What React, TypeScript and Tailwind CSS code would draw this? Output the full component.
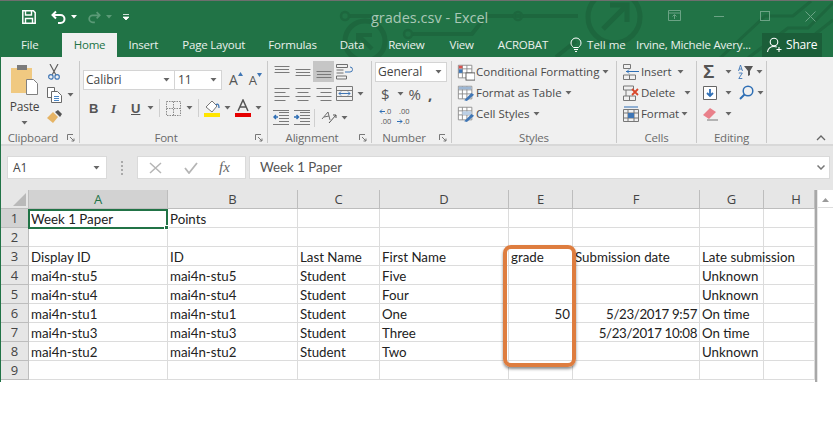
import type { ReactNode } from "react";

const ui = "font-['Open_Sans',sans-serif]";

function Caret({ className = "" }: { className?: string }) {
  return (
    <svg width="7" height="4" viewBox="0 0 7 4" className={`shrink-0 ${className}`}>
      <path d="M0.5 0h6L3.5 3.5z" fill="#666" />
    </svg>
  );
}

function Launcher() {
  return (
    <svg width="8" height="8" viewBox="0 0 8 8" className="shrink-0">
      <path d="M.5 6V.5H6M3 3l4 4M7 4.5V7H4.5" stroke="#777" fill="none" />
    </svg>
  );
}

function Lines({ kind, active = false }: { kind: "l" | "c" | "r"; active?: boolean }) {
  const rows = [2, 6, 10, 14];
  const w = [15, 11, 15, 11];
  return (
    <span className={`w-[21px] h-[21px] flex items-center justify-center ${active ? "bg-[#c6c6c6]" : ""}`}>
      <svg width="16" height="16" viewBox="0 0 16 16">
        {rows.map((y, i) => (
          <rect
            key={y}
            x={kind === "l" ? 0.5 : kind === "c" ? (16 - w[i]) / 2 : 15.5 - w[i]}
            y={y}
            width={w[i]}
            height="1"
            fill="#7a7a7a"
          />
        ))}
      </svg>
    </span>
  );
}

function VAlign({ pos, active = false }: { pos: number; active?: boolean }) {
  return (
    <span className={`w-[21px] h-[21px] flex items-center justify-center ${active ? "bg-[#c6c6c6]" : ""}`}>
      <svg width="16" height="16" viewBox="0 0 16 16">
        {[0, 3, 6].map((d, i) => (
          <rect key={d} x={i === 1 ? 1 : 0.5} y={pos + d} width={i === 1 ? 14 : 15} height="1" fill="#7a7a7a" />
        ))}
      </svg>
    </span>
  );
}

// the grow / shrink font buttons: a letter with a small blue triangle
function SizeButton({ size, up, className }: { size: string; up: boolean; className: string }) {
  return (
    <span className={`flex items-start text-[#555] leading-none ${size} ${className}`}>
      A
      <svg width="5" height="4" viewBox="0 0 5 4" className="shrink-0 -mt-[1px]">
        <path d={up ? "M0 4h5L2.500 0z" : "M0 0h5L2.500 4z"} fill="#3f76b5" />
      </svg>
    </span>
  );
}

function Group({ width, label, launcher, children }: { width: string; label: string; launcher?: boolean; children: ReactNode }) {
  return (
    <div className={`${width} shrink-0 h-[82px] flex flex-col border-r border-[#c9c9c9]`}>
      <div className="h-[72px] relative flex">{children}</div>
      <div className="flex-1 flex items-center relative">
        <span className={`flex-1 text-center text-[11.5px] tracking-[-0.2px] leading-none text-[#6b6b6b] ${launcher ? "pr-[15px]" : ""}`}>
          {label}
        </span>
        {launcher && (
          <span className="absolute right-[4px] top-[2px]">
            <Launcher />
          </span>
        )}
      </div>
    </div>
  );
}

function GridIcon({ children }: { children?: ReactNode }) {
  return (
    <svg width="18" height="18" viewBox="0 0 20 18" className="shrink-0">
      <path d="M1.5 1.5h15v14h-15zM1.5 5.5h15M1.5 10h15M6 1.5v14M11 1.5v14" stroke="#8a8a8a" fill="#fff" />
      {children}
    </svg>
  );
}

function StyleRow({ icon, label }: { icon: ReactNode; label: string }) {
  return (
    <div className="h-[21px] flex items-center text-[11.5px] text-[#4a4a4a] whitespace-nowrap">
      {icon}
      <span className="ml-[1px]">{label}</span>
      <Caret className="ml-[3px]" />
    </div>
  );
}

function CellRow({ icon, label, width }: { icon: ReactNode; label: string; width: string }) {
  return (
    <div className="h-[21px] flex items-center text-[11.5px] tracking-[-0.1px] text-[#4a4a4a] whitespace-nowrap">
      <span className="w-[18px] shrink-0">{icon}</span>
      <span className={width}>{label}</span>
      <Caret />
    </div>
  );
}

const rows: string[][] = [
  ["Week 1 Paper", "Points", "", "", "", "", "", ""],
  ["", "", "", "", "", "", "", ""],
  ["Display ID", "ID", "Last Name", "First Name", "grade", "Submission date", "Late submission", ""],
  ["mai4n-stu5", "mai4n-stu5", "Student", "Five", "", "", "Unknown", ""],
  ["mai4n-stu4", "mai4n-stu4", "Student", "Four", "", "", "Unknown", ""],
  ["mai4n-stu1", "mai4n-stu1", "Student", "One", "50", "5/23/2017 9:57", "On time", ""],
  ["mai4n-stu3", "mai4n-stu3", "Student", "Three", "", "5/23/2017 10:08", "On time", ""],
  ["mai4n-stu2", "mai4n-stu2", "Student", "Two", "", "", "Unknown", ""],
  ["", "", "", "", "", "", "", ""],
];

const columns = ["A", "B", "C", "D", "E", "F", "G", "H"];

function Sheet() {
  return (
    <div className="relative flex bg-white h-[192px] overflow-hidden">
      <div className="w-[816px] shrink-0 border-r-2 border-[#a8a8a8] font-['Lato',sans-serif] text-[13.3px] text-[#222]">
        <div className="grid grid-cols-[28px_139px_130px_82px_129px_64px_127px_64px_51px]">
          <div className="h-[19px] bg-[#e6e6e6] border-r border-b border-[#bdbdbd] flex items-end justify-end p-[2px]">
            <svg width="13" height="13" viewBox="0 0 13 13">
              <path d="M13 0v13H0z" fill="#b9b9b9" />
            </svg>
          </div>
          {columns.map((c, i) => (
            <div
              key={c}
              className={`h-[19px] border-r border-b border-[#bdbdbd] flex items-center justify-center pt-[2px] ${ui} text-[13px] ${
                i === 0 ? "bg-[#d2d2d2] text-[#217346]" : "bg-[#e6e6e6] text-[#444]"
              } ${c === "H" ? "pl-[14px]" : ""}`}
            >
              {c}
            </div>
          ))}
          {rows.map((row, r) => (
            <Row key={r} n={r + 1} row={row} />
          ))}
        </div>
      </div>
      <div className="flex-1 bg-[#e6e6e6] pl-[1px]">
        <div className="h-full bg-white flex flex-col">
          <div className="h-[15px] mt-[3px] border-b border-[#ddd] flex items-center justify-center">
            <svg width="7" height="4" viewBox="0 0 7 4">
              <path d="M0 4h7L3.5 0z" fill="#9a9a9a" />
            </svg>
          </div>
        </div>
      </div>
      {/* orange highlight round the grade column */}
      <div className="absolute left-[502px] top-[55px] w-[73px] h-[122px] border-[4px] border-[#de7d3f] rounded-[8px] shadow-[0_2px_3px_rgba(0,0,0,0.45)]" />
      <div className="absolute left-[27px] top-[19px] w-[140px] h-[20px] border-2 border-[#217346]">
        <span className="absolute -right-[3px] -bottom-[3px] w-[5px] h-[5px] bg-[#217346] border border-white" />
      </div>
    </div>
  );
}

function Row({ n, row }: { n: number; row: string[] }) {
  return (
    <>
      <div
        className={`h-[19px] border-r border-b border-[#bdbdbd] flex items-center justify-center pt-[2px] ${ui} text-[13px] text-[#444] ${
          n === 1 ? "bg-[#d2d2d2]" : "bg-[#e6e6e6]"
        }`}
      >
        {n}
      </div>
      {row.map((v, i) => (
        <div
          key={i}
          className={`h-[19px] border-r border-b border-[#dcdcdc] flex items-center pt-[3px] pl-[2px] pr-[2px] whitespace-nowrap ${
            v === "50" ? "justify-end" : ""
          } ${v.startsWith("5/") ? "justify-end tracking-[-0.35px]" : ""}`}
        >
          {v}
        </div>
      ))}
    </>
  );
}

function TitleArt() {
  return (
    <svg className="absolute inset-0" width="833" height="57" viewBox="0 0 833 57" fill="none" stroke="#1d673e" strokeWidth="4">
      <path d="M349 15h22l8 8M518 15h60M412 33h60l14-18h32M576 40l-20 16" />
      <circle cx="345" cy="15" r="4" strokeWidth="2.5" />
      <circle cx="518" cy="15" r="4" strokeWidth="2.5" />
      <circle cx="408" cy="33" r="4" strokeWidth="2.5" />
      <circle cx="365" cy="40" r="20" strokeWidth="5" />
      <path d="M358 48V34h14M358 34l14 14" />
      <circle cx="614" cy="16" r="26" strokeWidth="5" />
      <path d="M603 28l23-23M610 4h17v17" strokeWidth="5" />
      <path d="M720 57l45-42h28l18-15M748 57l40-30h20l25-25M785 57l48-38" strokeWidth="3" />
    </svg>
  );
}

function TitleBar() {
  return (
    <div className={`relative bg-[#217346] h-[57px] border-t border-[#6e6e6e] text-white ${ui}`}>
      <TitleArt />
      <div className="relative h-[32px] flex items-center">
        <svg width="14" height="14" viewBox="0 0 14 14" className="ml-[22px]">
          <path d="M.8.8h10.6l1.8 1.8v10.6H.8z" stroke="#fff" strokeWidth="1.5" fill="none" />
          <path d="M3.5 1v4h6V1M3.5 13V8.5h7V13" stroke="#fff" strokeWidth="1.4" fill="none" />
        </svg>
        <svg width="16" height="14" viewBox="0 0 16 14" className="ml-[15px]">
          <path d="M5 1.5 1.5 5 5 8.5M2 5h7.5a4 4 0 0 1 0 8H7" stroke="#fff" strokeWidth="2" fill="none" />
        </svg>
        <svg width="6" height="4" viewBox="0 0 6 4" className="ml-[4px]">
          <path d="M0 0h6L3 3.5z" fill="#fff" />
        </svg>
        <svg width="14" height="14" viewBox="0 0 16 14" className="ml-[10px]">
          <path d="M11 1.5 14.500 5 11 8.500M14 5H6.500a4 4 0 0 0 0 8H9" stroke="#5b9a77" strokeWidth="2" fill="none" />
        </svg>
        <svg width="6" height="4" viewBox="0 0 6 4" className="ml-[5px]">
          <path d="M0 0h6L3 3.500z" fill="#5b9a77" />
        </svg>
        <svg width="6" height="6" viewBox="0 0 6 6" className="ml-[11px]">
          <path d="M0 .5h6M0 3h6L3 6z" stroke="#fff" strokeWidth=".8" fill="#fff" />
        </svg>
        <span className="absolute left-[371px] top-[8px] text-[14.5px] leading-[18px] text-[#a9c8b6]">grades.csv - Excel</span>
        <div className="absolute left-[668px] top-[9px] flex items-center">
          <svg width="13" height="12" viewBox="0 0 13 12" fill="none" stroke="#6ba385">
            <path d="M.5 .5h12v10H.5zM.5 3h12M6.500 9V5M4.500 6.500l2-2 2 2" />
          </svg>
          <span className="w-[10px] h-px bg-[#6ba385] ml-[33px]" />
          <span className="w-[10px] h-[10px] border border-[#6ba385] ml-[36px]" />
          <svg width="11" height="11" viewBox="0 0 11 11" className="ml-[35px]" stroke="#6ba385">
            <path d="M.5 .5l10 10M10.500 .5l-10 10" />
          </svg>
        </div>
      </div>
      <div className="relative h-[24px] flex items-center text-[11.5px] tracking-[-0.2px] text-[#e9f1ec] whitespace-nowrap">
        <span className="ml-[21px]">File</span>
        <span className="absolute left-[62px] top-0 w-[55px] h-[24px] bg-[#f0f0f0] text-[#217346] flex items-center justify-center">Home</span>
        <span className="ml-[90px]">Insert</span>
        <span className="ml-[24px]">Page Layout</span>
        <span className="ml-[23px]">Formulas</span>
        <span className="ml-[23px]">Data</span>
        <span className="ml-[24px]">Review</span>
        <span className="ml-[25px]">View</span>
        <span className="ml-[24px]">ACROBAT</span>
        <svg width="12" height="16" viewBox="0 0 12 16" className="ml-[22px]" fill="none" stroke="#fff">
          <path d="M3.500 10.500C2 9 1 8 1 6a5 5 0 0 1 10 0c0 2-1 3-2.500 4.500zM4 12.500h4M5 14.500h2" />
        </svg>
        <span className="ml-[5px] tracking-normal">Tell me</span>
        <span className="absolute left-[636px]">Irvine, Michele Avery...</span>
        <div className="absolute left-[762px] top-0 w-[60px] h-[24px] bg-[#1b5e39] flex items-center pl-[5px] text-white text-[12px]">
          <svg width="16" height="16" viewBox="0 0 16 16" fill="none" stroke="#fff" strokeWidth="1.1">
            <circle cx="7" cy="5" r="3.800" />
            <path d="M.5 15c.5-3.500 3-5.500 6.500-5.500 1 0 2 .2 2.800.6M12 10v5M9.500 12.500h5" />
          </svg>
          <span className="ml-[3px]">Share</span>
        </div>
      </div>
    </div>
  );
}

function Ribbon() {
  return (
    <div className={`relative h-[89px] bg-[#f0f0f0] border-b-2 border-[#d8d8d8] flex pt-[4px] pl-px ${ui}`}>
      {/* Clipboard */}
      <Group width="w-[78px]" label="Clipboard" launcher>
        <div className="w-[45px] flex flex-col items-center pt-[4px]">
          <svg width="28" height="30" viewBox="0 0 28 30">
            <rect x="0" y="3" width="21" height="25" fill="#f0c981" />
            <rect x="6" y="0" width="10" height="5" fill="#7b7b7b" />
            <path d="M15.500 14.500h7l4 4v11h-11z" fill="#fff" stroke="#808080" />
          </svg>
          <span className="text-[12px] tracking-[-0.2px] leading-none mt-[6px] text-[#444]">Paste</span>
          <Caret className="mt-[8px]" />
        </div>
        <div className="flex flex-col items-start pt-[3px] gap-[7px]">
          <svg width="14" height="16" viewBox="0 0 14 18" fill="none" stroke="#5d5d5d" strokeWidth="1.300">
            <path d="M2.500 0 9 12M11.500 0 5 12" />
            <circle cx="3.500" cy="14.500" r="2.500" stroke="#3f76b5" />
            <circle cx="10.500" cy="14.500" r="2.500" stroke="#3f76b5" />
          </svg>
          <div className="flex items-center gap-[5px]">
            <svg width="15" height="16" viewBox="0 0 15 16" fill="#fff" stroke="#6a6a6a">
              <path d="M.5 .5h7v10h-7z" />
              <path d="M4.500 4.500h6l4 4v7h-10z" />
              <path d="M7 9.500h5M7 11.500h5M7 13.500h5" stroke="#4a86c5" />
            </svg>
            <Caret />
          </div>
          <svg width="15" height="13" viewBox="0 0 15 13">
            <path d="M0 8l6-6 5 5-5 6z" fill="#e6b465" />
            <path d="M8 2l3-2 4 4-2 3z" fill="#555" />
          </svg>
        </div>
      </Group>

      {/* Font */}
      <Group width="w-[188px]" label="Font" launcher>
        <div className="flex flex-col pl-[3px] pt-[9px]">
          <div className="flex items-center">
            <div className="w-[92px] h-[20px] bg-white border border-[#d4d4d4] flex items-center justify-between px-[2px] pr-[4px] text-[12px] text-[#444]">
              Calibri
              <Caret />
            </div>
            <div className="w-[47px] h-[20px] bg-white border border-l-0 border-[#d4d4d4] flex items-center justify-between pl-[3px] pr-[4px] text-[12px] text-[#444]">
              11
              <Caret />
            </div>
            <SizeButton size="text-[14px]" up className="ml-[7px]" />
            <SizeButton size="text-[13px]" up={false} className="ml-[6px]" />
          </div>
          <div className="flex items-center mt-[9px] text-[#555]">
            <span className="ml-[6px] w-[12px] text-[13px] font-bold font-['Liberation_Sans',sans-serif] leading-none">B</span>
            <span className="ml-[10px] w-[10px] text-[13px] italic font-['Liberation_Serif',serif] font-bold leading-none">I</span>
            <span className="ml-[10px] w-[11px] text-[13px] underline font-['Liberation_Sans',sans-serif] font-bold leading-none">U</span>
            <Caret className="ml-[5px]" />
            <span className="ml-[5px] w-px h-[18px] bg-[#cfcfcf]" />
            <svg width="15" height="15" viewBox="0 0 15 15" className="ml-[6px]" stroke="#8a8a8a" strokeDasharray="1.500 1" fill="none">
              <path d="M.5 .5h14v14H.5zM7.500 .5v14M.5 7.500h14" />
            </svg>
            <Caret className="ml-[5px]" />
            <span className="ml-[5px] w-px h-[18px] bg-[#cfcfcf]" />
            <svg width="17" height="18" viewBox="0 0 17 18" className="ml-[5px]">
              <path d="M2 8l6-6 5 5-5 6z" fill="#fff" stroke="#777" />
              <path d="M12 6c2-2 3 0 3 3" stroke="#3f76b5" strokeWidth="1.300" fill="none" />
              <rect y="14" width="16" height="4" fill="#ffe500" />
            </svg>
            <Caret className="ml-[3px]" />
            <svg width="16" height="18" viewBox="0 0 16 18" className="ml-[4px]">
              <path d="M3 12 8 1l5 11M5 8h6" stroke="#555" strokeWidth="1.500" fill="none" />
              <rect y="14" width="16" height="4" fill="#e60000" />
            </svg>
            <Caret className="ml-[4px]" />
          </div>
        </div>
      </Group>

      {/* Alignment */}
      <Group width="w-[104px]" label="Alignment" launcher>
        <div className="flex flex-col pl-[3px]">
          <div className="flex items-center h-[21px]">
            <VAlign pos={2} />
            <VAlign pos={5} />
            <VAlign pos={7} active />
            <svg width="17" height="16" viewBox="0 0 17 16" className="ml-[2px]" fill="none" stroke="#6f6f6f">
              <path d="M.5 .5h11v3H.5zM.5 6h7M.5 9h7M.5 12h10v3H.5z" />
              <path d="M9 8h5a2 2 0 0 0 0-5" stroke="#3f76b5" />
            </svg>
          </div>
          <div className="flex items-center h-[21px] mt-[1px]">
            <Lines kind="l" />
            <Lines kind="c" />
            <Lines kind="r" />
            <svg width="17" height="15" viewBox="0 0 17 15" className="ml-[2px]" fill="none" stroke="#7a7a7a">
              <path d="M.5 .5h16v14H.5zM.5 4.500h16M.5 10.500h16" />
              <path d="M3 7.500h11M5 5.500l-2 2 2 2M12 5.500l2 2-2 2" stroke="#3f76b5" />
            </svg>
            <Caret className="ml-[4px]" />
          </div>
          <div className="flex items-center h-[21px] mt-[3px]">
            <svg width="16" height="15" viewBox="0 0 16 15" className="mx-[2px]">
              <path d="M6 2.500h10M6 5.500h10M6 8.500h10M6 11.500h10M0 14.500h16M0 .500h16" stroke="#7a7a7a" />
              <path d="M5 7H1M3 5 1 7l2 2" stroke="#2f6fb5" strokeWidth="1.500" fill="none" />
            </svg>
            <svg width="16" height="15" viewBox="0 0 16 15" className="mx-[3px]">
              <path d="M6 2.500h10M6 5.500h10M6 8.500h10M6 11.500h10M0 14.500h16M0 .500h16" stroke="#7a7a7a" />
              <path d="M0 7h4M2.500 5l2 2-2 2" stroke="#2f6fb5" strokeWidth="1.500" fill="none" />
            </svg>
            <span className="ml-[1px] w-px h-[18px] bg-[#cfcfcf]" />
            <svg width="16" height="15" viewBox="0 0 16 15" className="ml-[6px]" fill="none" stroke="#6f6f6f">
              <path d="M1 9 7 2l2 8M3 7l5-1" />
              <path d="M8 13 15 5M12 5h3v3" stroke="#555" />
            </svg>
            <Caret className="ml-[4px]" />
          </div>
        </div>
      </Group>

      {/* Number */}
      <Group width="w-[80px]" label="Number" launcher>
        <div className="flex flex-col pl-[3px] pt-[1px]">
          <div className="w-[72px] h-[20px] bg-white border border-[#d4d4d4] flex items-center justify-between pl-[2px] pr-[4px] text-[12px] text-[#444]">
            General
            <Caret />
          </div>
          <div className="flex items-center h-[22px] mt-[1px] text-[15px] text-[#555]">
            <span className="ml-[6px]">$</span>
            <Caret className="ml-[7px]" />
            <span className="ml-[5px]">%</span>
            <span className="ml-[7px] font-bold">,</span>
          </div>
          <div className="flex items-center h-[20px] mt-[1px] text-[7.5px] leading-[10px] text-[#555]">
            <span className="ml-[4px] flex flex-col items-end">
              <span className="flex items-center">
                <svg width="6" height="5" viewBox="0 0 6 5" fill="none" stroke="#2f6fb5">
                  <path d="M6 2.500H1M3 .500l-2 2 2 2" />
                </svg>
                .0
              </span>
              <span>.00</span>
            </span>
            <span className="ml-[6px] flex flex-col items-end">
              <span>.00</span>
              <span className="flex items-center">
                <svg width="6" height="5" viewBox="0 0 6 5" fill="none" stroke="#2f6fb5">
                  <path d="M0 2.500h5M3 .500l2 2-2 2" />
                </svg>
                .0
              </span>
            </span>
          </div>
        </div>
      </Group>

      {/* Styles */}
      <Group width="w-[165px]" label="Styles">
        <div className="flex flex-col pl-[5px]">
          <StyleRow
            label="Conditional Formatting"
            icon={
              <GridIcon>
                <rect x="2" y="2" width="4" height="3" fill="#d9534f" />
                <rect x="2" y="6" width="4" height="4" fill="#3f76b5" />
                <rect x="10" y="10" width="10" height="8" fill="#fff" stroke="#555" />
              </GridIcon>
            }
          />
          <StyleRow
            label="Format as Table"
            icon={
              <GridIcon>
                <rect x="2" y="2" width="14" height="3" fill="#9db7d4" />
                <path d="M8 17l8-8 3 2-8 7z" fill="#3f76b5" />
              </GridIcon>
            }
          />
          <StyleRow
            label="Cell Styles"
            icon={
              <GridIcon>
                <rect x="6" y="6" width="10" height="4" fill="#bcd0e6" />
                <path d="M8 17l8-8 3 2-8 7z" fill="#3f76b5" />
              </GridIcon>
            }
          />
        </div>
      </Group>

      {/* Cells */}
      <Group width="w-[80px]" label="Cells">
        <div className="flex flex-col pl-[6px]">
          <CellRow
            label="Insert"
            width="w-[36px]"
            icon={
              <svg width="16" height="16" viewBox="0 0 16 16" fill="none" stroke="#777">
                <path d="M.5 .5h7v4h-7zM.5 11h12v4.500H.5zM6.500 11v4.500" />
                <path d="M3 7.500h13M6 5.500l-2 2 2 2" stroke="#2f6fb5" />
              </svg>
            }
          />
          <CellRow
            label="Delete"
            width="w-[43px]"
            icon={
              <svg width="16" height="16" viewBox="0 0 16 16" fill="none" stroke="#777">
                <path d="M.5 1h10v4H.5zM.5 11h12v4.500H.5zM6.500 11v4.500M3 5v6" />
                <path d="M9 4l6 6M15 4l-6 6" stroke="#d8472b" strokeWidth="1.800" />
              </svg>
            }
          />
          <CellRow
            label="Format"
            width="w-[40px]"
            icon={
              <svg width="16" height="16" viewBox="0 0 16 16" fill="none" stroke="#777">
                <path d="M.5 3.500h15v12H.5zM.5 7h15M.5 12h15M5 3.500v12M11 3.500v12" />
                <rect x="5" y="7" width="6" height="5" fill="#3f76b5" stroke="none" />
                <path d="M1 1h14" stroke="#2f6fb5" />
              </svg>
            }
          />
        </div>
      </Group>

      {/* Editing */}
      <Group width="w-[70px]" label="Editing">
        <div className="flex flex-col pl-[6px]">
          <div className="flex items-center h-[21px]">
            <span className="w-[14px] text-[19px] leading-none font-bold text-[#555] font-['Liberation_Sans',sans-serif]">Σ</span>
            <Caret className="ml-[8px]" />
            <svg width="15" height="16" viewBox="0 0 15 16" className="ml-[6px]">
              <path d="M.5 7 2.500 1l2 6M1 5h3M.8 9h3.500L.8 14.500h3.500" stroke="#3f76b5" strokeWidth=".9" fill="none" />
              <path d="M6 2h9l-3 5v4l-2 1V7z" fill="#555" />
            </svg>
            <Caret className="ml-[3px]" />
          </div>
          <div className="flex items-center h-[21px]">
            <svg width="14" height="14" viewBox="0 0 14 14" fill="#fff" stroke="#666">
              <path d="M.5 .5h13v13H.5z" />
              <path d="M7 3v7M4 7l3 3 3-3" stroke="#2f6fb5" strokeWidth="1.800" fill="none" />
            </svg>
            <Caret className="ml-[8px]" />
            <svg width="15" height="15" viewBox="0 0 15 15" className="ml-[7px]" fill="none" stroke="#2f6fb5" strokeWidth="1.500">
              <circle cx="9" cy="6" r="4.800" />
              <path d="M5.500 9.500 1 14" strokeWidth="2" />
            </svg>
            <Caret className="ml-[3px]" />
          </div>
          <div className="flex items-center h-[21px]">
            <svg width="15" height="14" viewBox="0 0 15 14">
              <path d="M0 8 7 1l6 4-7 7z" fill="#e9808a" />
              <path d="M4 13h11" stroke="#777" />
            </svg>
            <Caret className="ml-[7px]" />
          </div>
        </div>
      </Group>

      <svg width="10" height="6" viewBox="0 0 10 6" className="absolute left-[815px] top-[78px]" fill="none" stroke="#666" strokeWidth="1.300">
        <path d="M1 5l4-4 4 4" />
      </svg>
    </div>
  );
}

function FormulaBar() {
  return (
    <div className={`h-[44px] bg-[#e6e6e6] flex items-center pl-[6px] pb-[1px] ${ui}`}>
      <div className="w-[100px] h-[23px] bg-white border border-[#dadada] flex items-center justify-between pl-[5px] pr-[6px] text-[12px] text-[#444]">
        A1
        <Caret />
      </div>
      <div className="w-[30px] flex flex-col items-center gap-[2px]">
        <span className="w-[2px] h-[2px] bg-[#aaa]" />
        <span className="w-[2px] h-[2px] bg-[#aaa]" />
        <span className="w-[2px] h-[2px] bg-[#aaa]" />
        <span className="w-[2px] h-[2px] bg-[#aaa]" />
      </div>
      <div className="w-[109px] h-[23px] bg-white border border-[#dadada] flex items-center pl-[11px]">
        <svg width="13" height="12" viewBox="0 0 13 12" stroke="#b5b5b5" strokeWidth="1.500">
          <path d="M1 1l11 10M12 1 1 11" />
        </svg>
        <svg width="14" height="12" viewBox="0 0 14 12" className="ml-[22px]" stroke="#b5b5b5" strokeWidth="1.800" fill="none">
          <path d="M1 6l4 5 8-10" />
        </svg>
        <span className="ml-[21px] text-[15px] italic text-[#666] font-['Liberation_Serif',serif]">fx</span>
      </div>
      <div className="ml-[3px] w-[581px] h-[23px] bg-white border border-[#dadada] flex items-center justify-between pl-[10px] pr-[4px] font-['Lato',sans-serif] text-[13.3px] text-[#555]">
        Week 1 Paper
        <svg width="8" height="5" viewBox="0 0 8 5" fill="none" stroke="#777" strokeWidth="1.500">
          <path d="M.5 .5 4 4 7.500 .5" />
        </svg>
      </div>
    </div>
  );
}

export default function App() {
  return (
    <div className="w-[833px] h-[428px] overflow-hidden bg-white">
      <TitleBar />
      <div className="border-l border-[#217346]">
        <Ribbon />
        <FormulaBar />
        <Sheet />
      </div>
    </div>
  );
}
